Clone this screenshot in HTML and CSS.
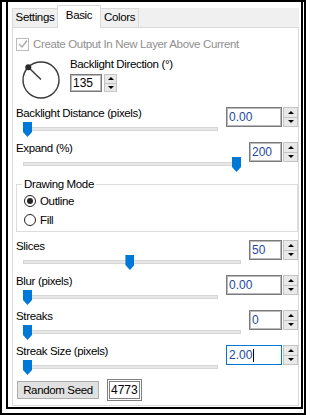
FILE: index.html
```html
<!DOCTYPE html>
<html lang="en">

<head>
  <meta charset="UTF-8">
  <title>Basic</title>
  <link rel="stylesheet" href="styles.css">
</head>

<body>
  <div class="frame">
    <div class="inner">
      <!-- Вкладки -->
      <div class="tabs">
        <span class="tab tab-settings">Settings</span>
        <span class="tab tab-basic active">Basic</span>
        <span class="tab tab-colors">Colors</span>
      </div>

      <div class="page">
        <label class="check disabled">
          <span class="checkbox">
            <svg width="10" height="10" viewBox="0 0 10 10">
              <path d="M1 5 L4 8 L9 1.5" fill="none" stroke="#a8a8a8" stroke-width="1.3" />
            </svg>
          </span>
          Create Output In New Layer Above Current
        </label>

        <!-- Направление подсветки -->
        <div class="direction">
          <svg class="dial" width="40" height="40" viewBox="0 0 40 40">
            <circle cx="20" cy="20" r="18" fill="none" stroke="#3a3a3a" stroke-width="1.4" />
            <line x1="20" y1="19.5" x2="7.3" y2="7.3" stroke="#3a3a3a" stroke-width="1.5" />
            <circle cx="7.3" cy="7.3" r="3" fill="#2a2a2a" />
          </svg>
          <div>
            <div class="label">Backlight Direction (°)</div>
            <div class="spin spin-small">
              <span class="field">135</span>
              <span class="arrows"><span class="up"></span><span class="down"></span></span>
            </div>
          </div>
        </div>

        <div class="ctl">
          <div class="label">Backlight Distance (pixels)</div>
          <div class="spin wide">
            <span class="field">0.00</span>
            <span class="arrows"><span class="up"></span><span class="down"></span></span>
          </div>
          <div class="slider"><span class="thumb" style="left: 0%"></span></div>
        </div>

        <div class="ctl">
          <div class="label">Expand (%)</div>
          <div class="spin">
            <span class="field">200</span>
            <span class="arrows"><span class="up"></span><span class="down"></span></span>
          </div>
          <div class="slider"><span class="thumb" style="left: calc(100% - 9px)"></span></div>
        </div>

        <fieldset class="group">
          <legend>Drawing Mode</legend>
          <label class="radio"><span class="dot checked"></span>Outline</label>
          <label class="radio"><span class="dot"></span>Fill</label>
        </fieldset>

        <div class="ctl">
          <div class="label">Slices</div>
          <div class="spin">
            <span class="field">50</span>
            <span class="arrows"><span class="up"></span><span class="down"></span></span>
          </div>
          <div class="slider"><span class="thumb" style="left: calc((100% - 9px) * 0.49)"></span></div>
        </div>

        <div class="ctl">
          <div class="label">Blur (pixels)</div>
          <div class="spin wide">
            <span class="field">0.00</span>
            <span class="arrows"><span class="up"></span><span class="down"></span></span>
          </div>
          <div class="slider"><span class="thumb" style="left: 0%"></span></div>
        </div>

        <div class="ctl">
          <div class="label">Streaks</div>
          <div class="spin">
            <span class="field">0</span>
            <span class="arrows"><span class="up"></span><span class="down"></span></span>
          </div>
          <div class="slider"><span class="thumb" style="left: 0%"></span></div>
        </div>

        <div class="ctl">
          <div class="label">Streak Size (pixels)</div>
          <div class="spin wide">
            <span class="field focused">2.00<span class="caret"></span></span>
            <span class="arrows"><span class="up"></span><span class="down"></span></span>
          </div>
          <div class="slider"><span class="thumb" style="left: 0%"></span></div>
        </div>

        <div class="seed-row">
          <button class="btn">Random Seed</button>
          <span class="seed">4773</span>
        </div>
      </div>
    </div>
  </div>
</body>

</html>
```

FILE: styles.css
```css
body {
  margin: 0;
  font-family: "Liberation Sans", Arial, sans-serif;
  font-size: 11.5px;
  letter-spacing: -0.35px;
  color: #000;
  background-color: #fff;
}

/* Двойная рамка окна */
.frame {
  width: 306px;
  height: 415px;
  box-sizing: border-box;
  border: 2px solid #000;
  padding: 0 1px 4px 4px;
}

.inner {
  height: 100%;
  box-sizing: border-box;
  border: 2px solid #000;
  border-top: none;
  padding-left: 4px;
  display: flex;
  flex-direction: column;
}

/* Вкладки */
.tabs {
  display: flex;
  height: 19px;
  margin-top: 6px;
  margin-right: 2px;
  background-color: #f0f0f0;
}

.tab {
  box-sizing: border-box;
  border-top: 1px solid #d9d9d9;
  padding-top: 1px;
  line-height: 14px;
  text-align: center;
}

.tab-settings {
  width: 45px;
  border-left: 1px solid #d9d9d9;
}

.tab-basic {
  width: 44px;
  border-left: 1px solid #d9d9d9;
  border-right: 1px solid #d9d9d9;
}

.tab-colors {
  width: 38px;
  border-right: 1px solid #d9d9d9;
}

.tab.active {
  position: relative;
  z-index: 1;
  height: 23px;
  margin-top: -3px;
  margin-bottom: -1px;
  padding-top: 2px;
  background-color: #fff;
}

/* Страница вкладки */
.page {
  flex: 1;
  margin: 0 2px 1px 0;
  border: 1px solid #d9d9d9;
  padding-left: 3px;
  background-color: #fff;
}

.label {
  line-height: 13px;
  white-space: nowrap;
}

.check {
  display: flex;
  align-items: center;
  gap: 4px;
  height: 12px;
  margin-top: 10px;
  line-height: 12px;
}

.check.disabled {
  color: #8f8f8f;
}

.checkbox {
  display: flex;
  align-items: center;
  justify-content: center;
  width: 13px;
  height: 13px;
  box-sizing: border-box;
  border: 1px solid #bcbcbc;
}

.direction {
  display: flex;
  margin-top: 7px;
  height: 43px;
}

.direction .label {
  line-height: 14px;
}

.dial {
  margin: 3px 9px 0 5px;
}

/* Поле со стрелками */
.spin {
  display: flex;
  height: 20px;
}

.spin-small {
  height: 18px;
  margin-top: 3px;
}

.field {
  display: flex;
  align-items: center;
  box-sizing: border-box;
  width: 33px;
  padding-left: 2px;
  border: 1px solid #7a7a7a;
  box-shadow: inset 0 0 0 1px #b9b9b9;
  color: #24489c;
  font-size: 12px;
  letter-spacing: 0;
  background-color: #fff;
}

.spin.wide .field {
  width: 56px;
}

.spin-small .field {
  width: 32px;
  color: #000;
}

.field.focused {
  border-color: #0078d7;
  box-shadow: none;
}

.caret {
  width: 1px;
  height: 13px;
  margin-left: 1px;
  background-color: #000;
}

.arrows {
  display: flex;
  flex-direction: column;
  width: 15px;
  margin-left: 1px;
}

.spin-small .arrows {
  width: 13px;
  margin-left: 2px;
}

.arrows span {
  flex: 1;
  display: flex;
  align-items: center;
  justify-content: center;
  border: 1px solid #c4c4c4;
  background-color: #e9e9e9;
}

.arrows .down {
  border-top: none;
}

.arrows span::before {
  content: "";
  border-left: 3px solid transparent;
  border-right: 3px solid transparent;
}

.arrows .up::before {
  border-bottom: 3px solid #000;
}

.arrows .down::before {
  border-top: 3px solid #000;
}

/* Строка с ползунком */
.ctl {
  display: grid;
  grid-template-columns: 1fr auto;
  grid-template-rows: 15px 15px;
  column-gap: 8px;
  margin-top: 5px;
}

.direction + .ctl {
  margin-top: 7px;
}

.ctl .label {
  grid-column: 1;
  grid-row: 1;
}

.ctl .spin {
  grid-column: 2;
  grid-row: 1 / span 2;
}

.slider {
  grid-column: 1;
  grid-row: 2;
  position: relative;
  margin-left: 7px;
}

.slider::before {
  content: "";
  position: absolute;
  left: 0;
  right: 0;
  top: 5px;
  height: 4px;
  box-sizing: border-box;
  border: 1px solid #d6d6d6;
  background-color: #e7e7e7;
}

.thumb {
  position: absolute;
  top: 0;
  width: 9px;
  height: 15px;
  background-color: #0078d7;
  clip-path: polygon(0 0, 100% 0, 100% 66%, 50% 100%, 0 66%);
}

/* Группа режимов */
.group {
  margin: 5px 0 0 0;
  min-width: 0;
  border: 1px solid #dcdcdc;
  padding: 3px 0 4px 7px;
}

.group legend {
  margin-left: -2px;
  padding: 0 2px;
  line-height: 14px;
}

.radio {
  display: flex;
  align-items: center;
  gap: 4px;
  height: 14px;
}

.radio + .radio {
  margin-top: 5px;
}

.dot {
  position: relative;
  width: 12px;
  height: 12px;
  box-sizing: border-box;
  border: 1px solid #222;
  border-radius: 50%;
}

.dot.checked::after {
  content: "";
  position: absolute;
  left: 2px;
  top: 2px;
  width: 6px;
  height: 6px;
  border-radius: 50%;
  background-color: #222;
}

.group + .ctl {
  margin-top: 8px;
}

/* Кнопка и поле сида */
.seed-row {
  display: flex;
  align-items: center;
  height: 22px;
  margin-top: 4px;
}

.btn {
  width: 82px;
  height: 18px;
  margin: 0 8px 0 1px;
  padding: 0;
  border: 1px solid #adadad;
  background-color: #e1e1e1;
  font: inherit;
  letter-spacing: inherit;
  color: #000;
}

.seed {
  display: flex;
  align-items: center;
  box-sizing: border-box;
  width: 35px;
  height: 22px;
  padding-left: 1px;
  border: 3px double #7f7f7f;
  font-size: 12px;
  letter-spacing: 0;
}
```
